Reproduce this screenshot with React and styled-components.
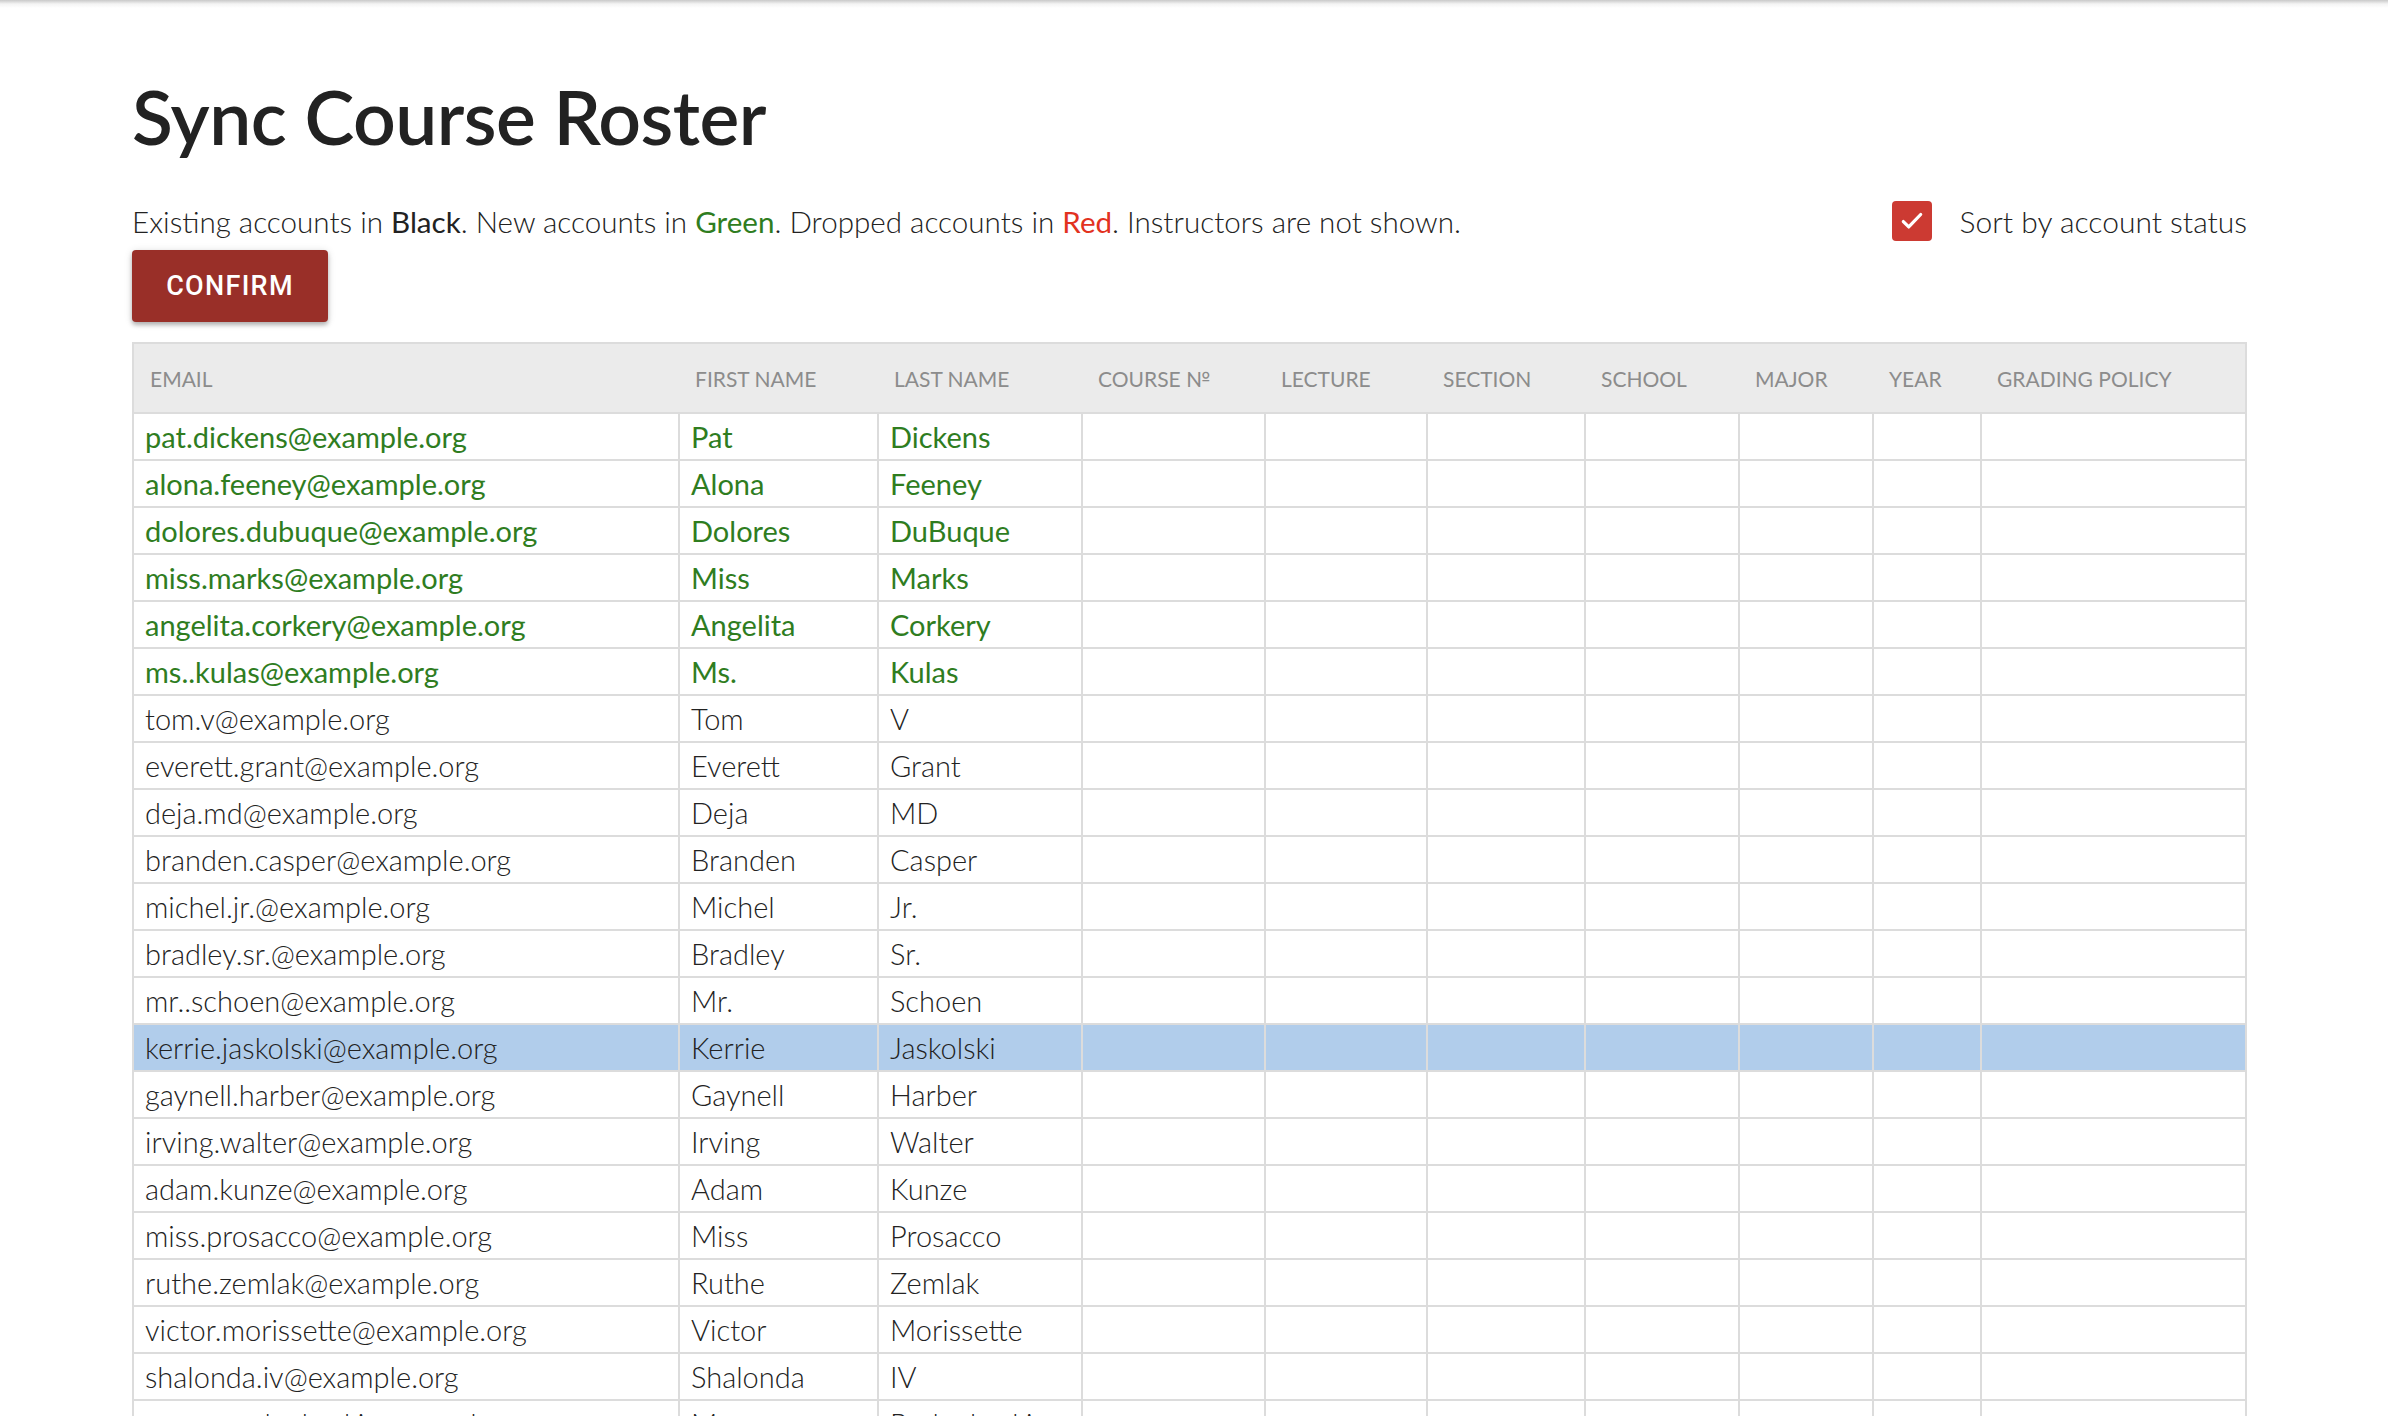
import React, { useState } from 'react';
import styled, { createGlobalStyle } from 'styled-components';

const GlobalStyle = createGlobalStyle`
  html, body {
    margin: 0;
    padding: 0;
    background: #fff;
    font-family: Lato, 'Open Sans', sans-serif;
    color: #222;
  }
`;

const Page = styled.div`
  min-height: 1416px;
  box-sizing: border-box;
  padding: 0 141px 0 132px;
  background: linear-gradient(#c9c9c9, #f4f4f4 4px, #fff 8px) top / 100% 8px no-repeat;
`;

const Title = styled.h1`
  margin: 0;
  padding-top: 68px;
  font-size: 75px;
  line-height: 96px;
  font-weight: 600;
  color: #222;
  letter-spacing: -0.5px;
`;

const InfoRow = styled.div`
  display: flex;
  align-items: center;
  justify-content: space-between;
  margin-top: 35px;
  height: 44px;
`;

const Legend = styled.p`
  margin: 0;
  font-size: 29.6px;
  font-weight: 300;
  color: #222;
`;

const Mark = styled.span`
  font-weight: 400;
  color: ${(p) => p.$color};
`;

const SortToggle = styled.label`
  display: flex;
  align-items: center;
  gap: 28px;
  font-size: 30px;
  font-weight: 300;
  cursor: pointer;
`;

const Box = styled.span`
  width: 40px;
  height: 40px;
  border-radius: 4px;
  background: ${(p) => (p.$checked ? '#cc3a32' : '#fff')};
  border: ${(p) => (p.$checked ? 'none' : '2px solid #999')};
  display: flex;
  align-items: center;
  justify-content: center;
`;

const ConfirmButton = styled.button`
  margin-top: 7px;
  width: 196px;
  height: 72px;
  border: none;
  border-radius: 4px;
  background: #992f28;
  color: #fff;
  font-family: Roboto, sans-serif;
  font-weight: 500;
  font-size: 27px;
  letter-spacing: 1.3px;
  box-shadow: 0 3px 4px rgba(0, 0, 0, 0.25), 0 1px 8px rgba(0, 0, 0, 0.12);
  cursor: pointer;
`;

const Table = styled.table`
  margin-top: 20px;
  width: 100%;
  table-layout: fixed;
  border-collapse: collapse;
  border: 2px solid #dcdcdc;
`;

const HeadCell = styled.th`
  height: 68px;
  padding: 0 0 0 16px;
  text-align: left;
  background: #ebebeb;
  color: #8c8c8c;
  font-size: 21px;
  font-weight: 400;
  text-transform: uppercase;
  white-space: nowrap;
  border-bottom: 2px solid #dcdcdc;
`;

const Row = styled.tr`
  background: ${(p) => (p.$selected ? '#b1cdeb' : '#fff')};
  color: ${(p) => (p.$status === 'new' ? '#2f7d1f' : p.$status === 'dropped' ? '#e2321f' : '#222')};
`;

const Cell = styled.td`
  height: 45px;
  padding: 0 0 0 11px;
  font-size: 29px;
  font-weight: ${(p) => (p.$status === 'new' ? 400 : 300)};
  white-space: nowrap;
  overflow: hidden;
  border: 2px solid #dcdcdc;
  border-top: none;
`;

const columns = [
  { key: 'email', label: 'Email', width: 546 },
  { key: 'first', label: 'First Name', width: 199 },
  { key: 'last', label: 'Last Name', width: 204 },
  { key: 'course', label: 'Course №', width: 183 },
  { key: 'lecture', label: 'Lecture', width: 162 },
  { key: 'section', label: 'Section', width: 158 },
  { key: 'school', label: 'School', width: 154 },
  { key: 'major', label: 'Major', width: 134 },
  { key: 'year', label: 'Year', width: 108 },
  { key: 'grading', label: 'Grading Policy', width: 265 },
];

const students = [
  ['pat.dickens@example.org', 'Pat', 'Dickens', 'new'],
  ['alona.feeney@example.org', 'Alona', 'Feeney', 'new'],
  ['dolores.dubuque@example.org', 'Dolores', 'DuBuque', 'new'],
  ['miss.marks@example.org', 'Miss', 'Marks', 'new'],
  ['angelita.corkery@example.org', 'Angelita', 'Corkery', 'new'],
  ['ms..kulas@example.org', 'Ms.', 'Kulas', 'new'],
  ['tom.v@example.org', 'Tom', 'V'],
  ['everett.grant@example.org', 'Everett', 'Grant'],
  ['deja.md@example.org', 'Deja', 'MD'],
  ['branden.casper@example.org', 'Branden', 'Casper'],
  ['michel.jr.@example.org', 'Michel', 'Jr.'],
  ['bradley.sr.@example.org', 'Bradley', 'Sr.'],
  ['mr..schoen@example.org', 'Mr.', 'Schoen'],
  ['kerrie.jaskolski@example.org', 'Kerrie', 'Jaskolski'],
  ['gaynell.harber@example.org', 'Gaynell', 'Harber'],
  ['irving.walter@example.org', 'Irving', 'Walter'],
  ['adam.kunze@example.org', 'Adam', 'Kunze'],
  ['miss.prosacco@example.org', 'Miss', 'Prosacco'],
  ['ruthe.zemlak@example.org', 'Ruthe', 'Zemlak'],
  ['victor.morissette@example.org', 'Victor', 'Morissette'],
  ['shalonda.iv@example.org', 'Shalonda', 'IV'],
  ['maura.rodenhaski@example.org', 'Maura', 'Rodenhaski'],
];

const Check = () => (
  <svg width="26" height="26" viewBox="0 0 24 24" fill="none" stroke="#fff" strokeWidth="3" strokeLinecap="round" strokeLinejoin="round">
    <path d="M4 12.5l5 5L20 6" />
  </svg>
);

export default function App() {
  const [sorted, setSorted] = useState(true);
  const [selected, setSelected] = useState(13);

  return (
    <Page>
      <GlobalStyle />
      <Title>Sync Course Roster</Title>
      <InfoRow>
        <Legend>
          Existing accounts in <Mark $color="#222">Black</Mark>. New accounts in{' '}
          <Mark $color="#2f7d1f">Green</Mark>. Dropped accounts in <Mark $color="#e2321f">Red</Mark>.
          Instructors are not shown.
        </Legend>
        <SortToggle onClick={() => setSorted(!sorted)}>
          <Box $checked={sorted}>{sorted && <Check />}</Box>
          Sort by account status
        </SortToggle>
      </InfoRow>
      <ConfirmButton>CONFIRM</ConfirmButton>
      <Table>
        <colgroup>
          {columns.map((c) => (
            <col key={c.key} style={{ width: c.width }} />
          ))}
        </colgroup>
        <thead>
          <tr>
            {columns.map((c) => (
              <HeadCell key={c.key}>{c.label}</HeadCell>
            ))}
          </tr>
        </thead>
        <tbody>
          {students.map(([email, first, last, status], i) => (
            <Row key={email} $status={status} $selected={i === selected} onClick={() => setSelected(i)}>
              <Cell $status={status}>{email}</Cell>
              <Cell $status={status}>{first}</Cell>
              <Cell $status={status}>{last}</Cell>
              {columns.slice(3).map((c) => (
                <Cell key={c.key} />
              ))}
            </Row>
          ))}
        </tbody>
      </Table>
    </Page>
  );
}
